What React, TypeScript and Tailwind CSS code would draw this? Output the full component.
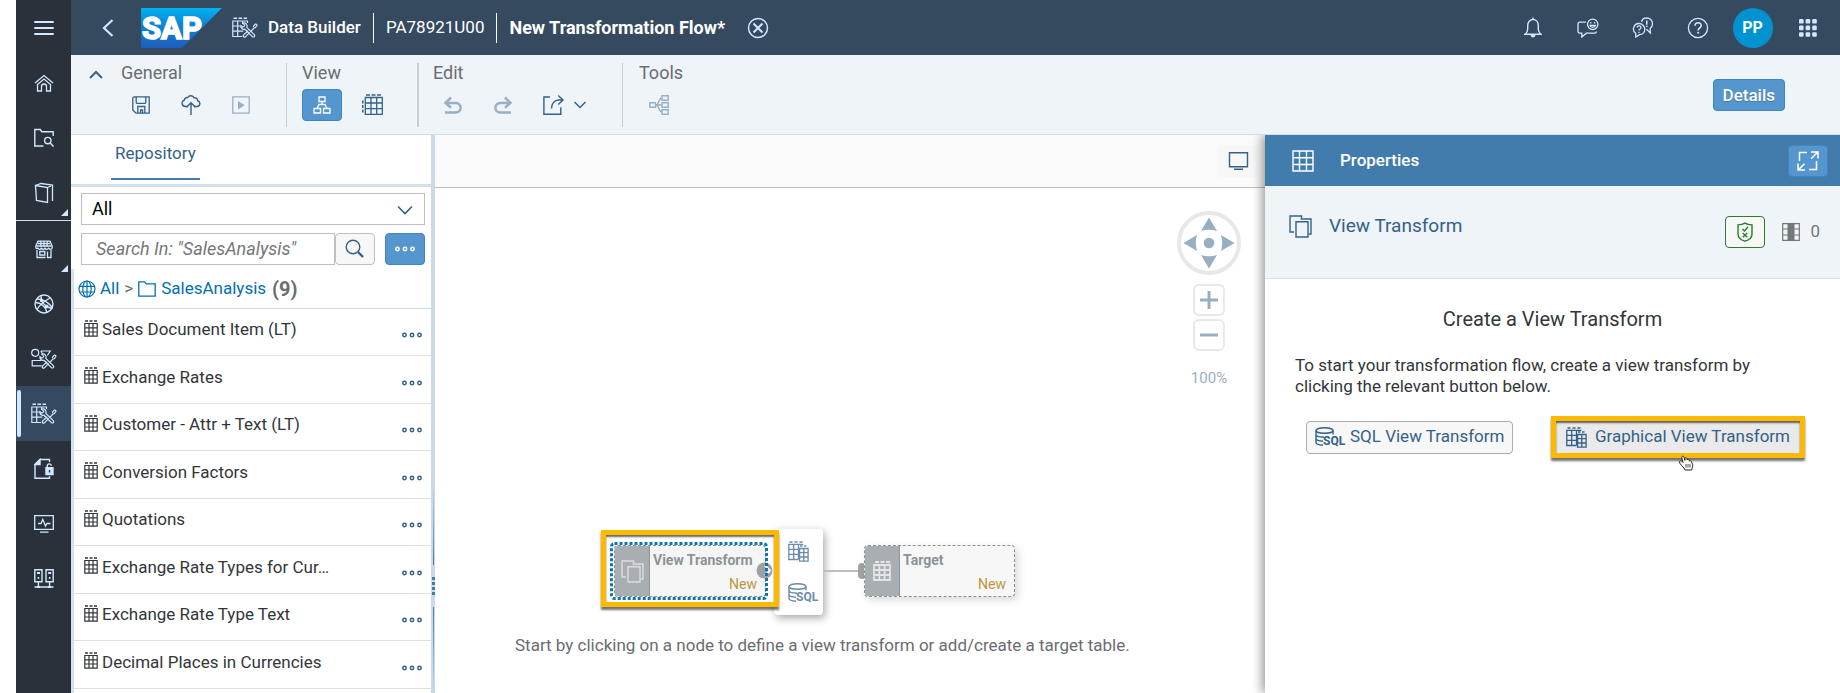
import type { ReactNode } from "react";

type IconProps = { className?: string };

function Svg({ w, h, className = "", sw = 1.3, children }: { w: number; h: number; className?: string; sw?: number; children: ReactNode }) {
  return (
    <svg
      width={w}
      height={h}
      viewBox={`0 0 ${w} ${h}`}
      fill="none"
      stroke="currentColor"
      strokeWidth={sw}
      className={`shrink-0 ${className}`}
      aria-hidden="true"
    >
      {children}
    </svg>
  );
}

const ChevronDown = ({ className }: IconProps) => (
  <Svg w={16} h={10} className={className} sw={1.6}>
    <path d="M1 1.5 8 8.5 15 1.5" />
  </Svg>
);

const SmallChevron = () => (
  <Svg w={12} h={8} sw={1.4}>
    <path d="M.5 1 6 6.500 11.500 1" />
  </Svg>
);

const MenuIcon = () => (
  <Svg w={20} h={16} sw={2}>
    <path d="M1 2h18M1 8h18M1 14h18" strokeLinecap="round" />
  </Svg>
);

const HomeIcon = () => (
  <Svg w={20} h={20}>
    <path d="M1 10 10 2.500 19 10" />
    <path d="M3.500 11.500 10 6l6.500 5.500V18H12.500v-4.500a2.500 2.500 0 0 0-5 0V18h-4z" />
  </Svg>
);

const FolderSearchIcon = () => (
  <Svg w={20} h={20} sw={1.4}>
    <path d="M9.500 18H.8V1.500h5.500l1.500 2.200h11.400V8" />
    <circle cx="13.800" cy="12.600" r="3.200" />
    <path d="m16.200 15 3.300 3.600" />
  </Svg>
);

const BoxIcon = () => (
  <Svg w={20} h={22} sw={1.3}>
    <path d="M1.500 3.500 13.500 5.500V20.500L2.500 18.500z" />
    <path d="M1.500 3.500 7 1.500 18.500 3V19M13.500 5.500 17 4" />
  </Svg>
);

const ShopIcon = () => (
  <Svg w={18} h={20} sw={1.3}>
    <path d="M3 2.200h12l2.200 5v1.300a1.800 1.800 0 0 1-3.600 0 1.800 1.800 0 0 1-3.600 0 1.800 1.800 0 0 1-3.600 0 1.800 1.800 0 0 1-3.600 0 1 1 0 0 1-2 0V7.200z" />
    <path d="M3 4.500h12M1.500 7h15M5.800 2v6M9 2v6M12.200 2v6" />
    <path d="M2 11v7.500h8.500M16 11v7.500h-3.500v-6M4.800 12.500h5v3.500h-5z" />
  </Svg>
);

const NetworkIcon = () => (
  <Svg w={20} h={20} sw={1.4}>
    <circle cx="10" cy="10" r="9" />
    <path d="M7 2c0 6 4 11 11.500 12.500M3 5c6 0 11 3 15.500 8.500M1.500 8.500C7 8.500 12 13 13 18.500M16 4C11.500 6.500 5.500 11 3 15.500" />
    <circle cx="7.500" cy="6.500" r="1" fill="currentColor" />
    <circle cx="12.500" cy="12.500" r="1.300" fill="currentColor" />
  </Svg>
);

const toolsPath = (
  <>
    <path d="m10.800 6.200 1.900 1.900-.7 1.500-1.600.4-1.500-1.400a3.100 3.100 0 0 0 4 3.600l7.500 7.400a1.200 1.200 0 0 0 1.900-1.900l-7.500-7.300a3.100 3.100 0 0 0-4-4.200z" />
    <path d="m23.800 6.800 1.200 1.200-1.500 2.500-1.300.3-3.800 4M16.200 13.700l-4.600 4.200a1.300 1.300 0 0 0 1.800 1.900l4.300-4.500M21.400 10l.3-1.300 2.100-1.900" />
  </>
);

const DataBuilderIcon = () => (
  <Svg w={26} h={22} sw={1.2}>
    <path d="M1.500 1.200h3.500M6.500 1.200h3.500M11.500 1.200H15" strokeWidth="1.600" />
    <path d="M10 19.500H.8V4h14.700v2M5.700 4v15.500M10.600 4v3M.8 9h8M.8 14.200h10.500" />
    {toolsPath}
  </Svg>
);

const BusinessBuilderIcon = () => (
  <Svg w={26} h={22} sw={1.2}>
    <circle cx="4.200" cy="4.800" r="3.500" />
    <path d="M9.800 3h9.500l-3 4.500M9.800 3l1.700 3M10.500 12.500H1.200v5.300h9.500" />
    {toolsPath}
  </Svg>
);

const LockedDocIcon = () => (
  <Svg w={20} h={22} sw={1.4}>
    <path d="M15.500 4V1.500H6L1 6.500v13.800h14.500v-2" />
    <path d="M6 1.500v5H1z" fill="currentColor" />
    <path d="M12 9.800h7v6.800h-7z" fill="currentColor" />
    <path d="M13.300 9.500V8a2 2 0 0 1 4-.2" />
    <path d="M15.500 12v2.500" stroke="#2a313a" />
  </Svg>
);

const MonitorPulseIcon = () => (
  <Svg w={20} h={20} sw={1.3}>
    <path d="M.7 1.700h18.600v13.600H.7zM6 18.200h8.500" />
    <path d="M4 9.500h3l1.800-4 2.700 6.500 1.500-2.500h3.500" />
  </Svg>
);

const ServersIcon = () => (
  <Svg w={20} h={20} sw={1.4}>
    <path d="M.8.800h7.200v12H.8zM12 .8h7.200v12H12zM4.400 13v6M15.600 13v6M.5 18h19" />
    <path d="M3 4h3M14.200 4h3M3.700 9h1.500M14.900 9h1.500" strokeWidth="1.800" />
    <path d="M3 17h3v2H3zM14 17h3v2h-3z" fill="currentColor" stroke="none" />
  </Svg>
);

const BellIcon = () => (
  <Svg w={18} h={21} sw={1.4}>
    <path d="M1 17.200c2-1.500 2.700-2.700 2.700-5V8.500C3.700 5 6 2.500 9 2.500s5.300 2.500 5.300 6v3.700c0 2.300.7 3.500 2.700 5z" />
    <path d="M9 .5v2" />
    <path d="M6.500 18h5a2.500 2.500 0 0 1-5 0z" fill="currentColor" stroke="none" />
  </Svg>
);

const FeedbackIcon = () => (
  <Svg w={22} h={20} sw={1.3}>
    <path d="M9 4.200H2.700a1.700 1.700 0 0 0-1.700 1.700v7.600a1.700 1.700 0 0 0 1.700 1.700h2.100V19l4.500-3.800h8.400a1.700 1.700 0 0 0 1.700-1.700" />
    <circle cx="15.700" cy="6.300" r="5.200" />
    <path d="M13 7.300c.5 2.400 4.900 2.400 5.400 0z" />
    <path d="M13.800 4v1.600M17.600 4v1.600" />
  </Svg>
);

const ChatHelpIcon = () => (
  <Svg w={22} h={21} sw={1.3}>
    <path d="M9.600 5C10 2.500 12 1 14.500 1A5.700 5.700 0 0 1 20.500 6.700c0 2.300-1 3.800-2.300 4.600l.2 4.700-4-3.800" />
    <path d="M7 6.500a5.800 5.800 0 0 1 5.800 5.700C12.800 15.300 10.500 17.500 7.500 17.700L3.800 20V16.500A5.500 5.500 0 0 1 7 6.500z" />
    <path d="M5 10.500c.2-2.200 4-2.200 4 0 0 1.500-2 1.500-2 3M7 14.700v1.300" />
    <path d="M14.800 3.500v4.300M14.800 8.800V10" strokeWidth="1.500" />
  </Svg>
);

const HelpIcon = () => (
  <Svg w={22} h={22} sw={1.3}>
    <circle cx="11" cy="11" r="9.600" />
    <path d="M8 8.800c0-4 6.200-4 6.200-.3 0 2.300-3 2.500-3 5" strokeWidth="1.600" />
    <path d="M11.200 14.800v1.800" strokeWidth="1.800" />
  </Svg>
);

const AppsIcon = () => (
  <Svg w={18} h={18}>
    {[0, 6.600, 13.200].map((y) =>
      [0, 6.600, 13.200].map((x) => (
        <rect key={`${x}-${y}`} x={x} y={y} width="4.600" height="4.600" rx="1.200" fill="currentColor" stroke="none" />
      )),
    )}
  </Svg>
);

const SaveIcon = () => (
  <Svg w={18} h={18} sw={1.3}>
    <path d="M2.300.8h14.900v16.400H4L.8 14V2.300A1.500 1.500 0 0 1 2.300.8z" />
    <path d="M4.200.8v5.400a1.200 1.200 0 0 0 1.200 1.200h7.200a1.200 1.200 0 0 0 1.200-1.200V.8M5.800 17v-6.500h7V17M8.500 17v-3h2v3" />
  </Svg>
);

const CloudUpIcon = () => (
  <Svg w={20} h={20} sw={1.4}>
    <path d="M7 11.500H4.200a3.300 3.300 0 0 1-.9-6.400A3 3 0 0 1 6.700 2.500C8 .2 12 .2 13 2.800a3 3 0 0 1 3.700 3 2.900 2.900 0 0 1-.6 5.700H13" />
    <path d="M10 20V8M5.500 12.300 10 7.800l4.500 4.500" />
  </Svg>
);

const PlayBoxIcon = () => (
  <Svg w={18} h={18} sw={1.3}>
    <path d="M.8.800h16.400v16.400H.8z" />
    <path d="M6 5v8.400l6.800-4.200z" fill="currentColor" stroke="none" />
  </Svg>
);

const DiagramIcon = () => (
  <Svg w={18} h={18} sw={1.3}>
    <path d="M6 1h6v4.500H6zM1 12.500h6.500V17H1zM10.500 12.500H17V17h-6.500zM9 5.500v3M4 12.500 6 8.500h6l2 4" />
  </Svg>
);

const DataTableIcon = () => (
  <Svg w={21} h={21} sw={1.3}>
    <path d="M4 .9h4M9.500 .9h4M15 .9h4M.8 6.500v3M.8 11v3M.8 15.500v3" strokeWidth="1.500" />
    <path d="M3.300 3.500h17v16.800h-17zM9 3.500v17M14.700 3.500v17M3.300 9h17M3.300 14.700h17" />
  </Svg>
);

const UndoIcon = () => (
  <Svg w={18} h={18} sw={2.500}>
    <path d="M1 16.500h10.800a4.800 4.800 0 0 0 0-9.600H1.800M7 1.500 1.500 6.900 7 11.800" />
  </Svg>
);

const RedoIcon = () => (
  <Svg w={18} h={18} sw={2.500}>
    <path d="M17 16.500H6.200a4.800 4.800 0 0 1 0-9.600h10M11 1.500 16.500 6.900 11 11.800" />
  </Svg>
);

const ExportIcon = () => (
  <Svg w={21} h={20} sw={1.400}>
    <path d="M7 2H.9v17.200h16.900v-7" />
    <path d="M8.500 13.500c0-5 3-8.500 7-8.500h4.300M15.300.6 20 5l-4.700 4.400" />
  </Svg>
);

const TreeIcon = () => (
  <Svg w={20} h={20} sw={1.400}>
    <path d="M.8 7.800h5.700v4.400H.8zM13 .8h6.200v4.400H13zM13 7.800h6.200v4.400H13zM13 14.800h6.200v4.400H13zM6.500 10H13M7 10c3 0 2.500-7 6-7M7 10c3 0 2.500 7 6 7" />
  </Svg>
);

const SearchIcon = () => (
  <Svg w={20} h={20} sw={1.400}>
    <circle cx="8" cy="8" r="6.800" />
    <path d="m13 13 5 5" strokeWidth="2.400" />
  </Svg>
);

const DotsIcon = () => (
  <Svg w={20} h={6} sw={1.500}>
    <circle cx="2.500" cy="3" r="1.700" />
    <circle cx="10" cy="3" r="1.700" />
    <circle cx="17.500" cy="3" r="1.700" />
  </Svg>
);

const GlobeIcon = () => (
  <Svg w={18} h={18} sw={1.200}>
    <circle cx="9" cy="9" r="8" />
    <ellipse cx="9" cy="9" rx="4.200" ry="8" />
    <path d="M1.500 6.300h15M1.500 12h15M9 1v16" />
  </Svg>
);

const FolderIcon = () => (
  <Svg w={18} h={16} sw={1.300}>
    <path d="M.8.900h5.700l1.700 2h9v12.200H.8z" />
  </Svg>
);

const TableIcon = ({ className }: IconProps) => (
  <Svg w={14} h={17} sw={1.200} className={className}>
    <path d="M1 1h3M5.500 1h3M10 1h3" strokeWidth="1.400" />
    <path d="M.8 3.500h12.400v12.700H.8zM5 3.500v12.700M9 3.500v12.700M.8 7.800h12.400M.8 12h12.400" />
  </Svg>
);

const MonitorIcon = () => (
  <Svg w={21} h={18} sw={1.400}>
    <path d="M1.500.8h18v14h-18zM6 17.200h9" />
  </Svg>
);

const GridIcon = () => (
  <Svg w={22} h={22} sw={1.400}>
    <path d="M1 1h20v20H1zM7.500 1v20M14.500 1v20M1 7.800h20M1 14.500h20" />
  </Svg>
);

const ExpandIcon = () => (
  <Svg w={22} h={20} sw={1.500}>
    <path d="M2.500 10V1.500h7.500M19.500 10v8.500H12" />
    <path d="M14 .9h7v6.500M21 .9l-7 6.800M1 12.500v6.600h7M1 19.100l6.500-6.400" />
  </Svg>
);

const CopyIcon = ({ className }: IconProps) => (
  <Svg w={23} h={23} sw={1.400} className={className}>
    <path d="M5 17H1V1h11.500v2" />
    <path d="M11.500 4H22v15h-2.500" />
    <path d="M7 6.700h12V22H7z" />
  </Svg>
);

const ShieldIcon = () => (
  <Svg w={16} h={20} sw={1.400}>
    <path d="M8 1.200c2 1.300 4.300 1.700 7 1.700v9c0 3.500-3 6-7 7.300-4-1.300-7-3.800-7-7.300v-9c2.700 0 5-.4 7-1.700z" />
    <path d="m5.500 7 2 2 3.500-4.200M5.700 11l4.600 4.200M10.300 11l-4.600 4.200" />
  </Svg>
);

const ColumnIcon = () => (
  <Svg w={18} h={18} sw={1.200}>
    <path d="M.7.700h16.600v16.600H.7zM.7 6h16.600M.7 12h16.600" />
    <path d="M5.500 0h7v18h-7z" fill="currentColor" stroke="none" />
  </Svg>
);

const GraphicalViewIcon = () => (
  <Svg w={21} h={21} sw={1.300}>
    <path d="M1.500 1h3M6.500 1h3M11.500 1h3M12 5h2.500M16 5h2.500" strokeWidth="1.500" />
    <path d="M10.500 18.500H.8V3.300h14.500M5.700 3.300v15.200M10.500 3.300v15.200M.8 8.300h10M.8 13.400h10" />
    <path d="M11.600 7.500h8.500v12.700h-8.500zM15.800 7.500v12.700M11.600 11.700h8.500M11.600 16h8.500" />
  </Svg>
);

const SqlIcon = () => (
  <svg width="31" height="20" viewBox="0 0 31 20" fill="none" stroke="currentColor" strokeWidth="1.400" className="shrink-0" aria-hidden="true">
    <ellipse cx="9.500" cy="3.500" rx="8.500" ry="2.800" />
    <path d="M1 3.500v12c0 1.400 3 2.500 7 2.700M18 3.500v4M1 7.500c0 1.500 3.500 2.600 8 2.700M1 11.500c0 1.500 3.200 2.500 7 2.700" />
    <text x="8" y="18" fill="currentColor" stroke="none" fontFamily="Roboto, sans-serif" fontWeight="700" fontSize="12">
      SQL
    </text>
  </svg>
);

const SapLogo = () => (
  <svg width="81" height="40" viewBox="0 0 81 40" className="shrink-0" role="img" aria-label="SAP">
    <defs>
      <linearGradient id="sap" x1="0" y1="0" x2="0" y2="1">
        <stop offset="0" stopColor="#00b4f1" />
        <stop offset="0.400" stopColor="#0d86d6" />
        <stop offset="1" stopColor="#1e5dbb" />
      </linearGradient>
    </defs>
    <path d="M0 0h81L41 40H0z" fill="url(#sap)" />
    <text x="1" y="31" fill="#fff" stroke="#fff" strokeWidth="1.600" fontFamily="Roboto, 'Liberation Sans', sans-serif" fontWeight="700" fontSize="31">
      SAP
    </text>
  </svg>
);

type NavItem = { label: string; icon: ReactNode; active?: boolean; sub?: boolean; ruled?: boolean };

const navItems: NavItem[] = [
  { label: "Home", icon: <HomeIcon /> },
  { label: "Repository Explorer", icon: <FolderSearchIcon /> },
  { label: "Catalog", icon: <BoxIcon />, sub: true, ruled: true },
  { label: "Data Marketplace", icon: <ShopIcon />, sub: true },
  { label: "Semantic Onboarding", icon: <NetworkIcon /> },
  { label: "Business Builder", icon: <BusinessBuilderIcon /> },
  { label: "Data Builder", icon: <DataBuilderIcon />, active: true },
  { label: "Data Access Controls", icon: <LockedDocIcon /> },
  { label: "Data Integration Monitor", icon: <MonitorPulseIcon /> },
  { label: "Connections", icon: <ServersIcon /> },
];

function SideNav() {
  return (
    <nav className="flex w-[55px] shrink-0 flex-col bg-[#2a313a] text-[#d1e8ff]">
      <button aria-label="Menu" className="flex h-[55px] items-center justify-center">
        <MenuIcon />
      </button>
      {navItems.map((n) => (
        <a
          key={n.label}
          href="#"
          aria-label={n.label}
          className={`relative flex items-center justify-center ${n.active ? "bg-[#354a5f]" : ""} ${n.ruled ? "h-14 border-b border-[#d5dade]" : "h-[55px]"}`}
        >
          {n.icon}
          {n.active && <span className="absolute inset-y-1 left-[1px] w-1 rounded-full bg-[#d1e8ff]" />}
          {n.sub && (
            <svg width="7" height="7" viewBox="0 0 7 7" className="absolute right-[3px] bottom-1" aria-hidden="true">
              <path d="M7 0v7H0z" fill="#d1e8ff" />
            </svg>
          )}
        </a>
      ))}
    </nav>
  );
}

const shellButton = "flex h-[55px] w-[55px] items-center justify-center";

function ShellBar() {
  return (
    <header className="flex h-[55px] shrink-0 items-center bg-[#354a5f] pr-[5px] text-lg text-white">
      <button aria-label="Back" className="flex h-10 w-[70px] items-center justify-center pl-1 text-[#d1e8ff]">
        <Svg w={12} h={18} sw={2.200}>
          <path d="M10.500 1 2 9l8.500 8" />
        </Svg>
      </button>
      <SapLogo />
      <span className="ml-[10px] text-[#d1e8ff]">
        <DataBuilderIcon />
      </span>
      <a href="#" className="ml-[10px] text-[17px] font-medium">Data Builder</a>
      <span className="mx-3 h-[30px] w-px bg-white" />
      <a href="#" className="text-[17px]">PA78921U00</a>
      <span className="mx-3 h-[30px] w-px bg-white" />
      <h1 className="font-bold">New Transformation Flow*</h1>
      <button aria-label="Close" className="ml-[22px] text-[#d1e8ff]">
        <Svg w={22} h={22} sw={1.500}>
          <circle cx="11" cy="11" r="9.500" />
          <path d="m6.500 6.500 9 9M15.500 6.500l-9 9" strokeWidth="2" />
        </Svg>
      </button>
      <div className="ml-auto flex items-center text-[#d1e8ff]">
        <button aria-label="Notifications" className={shellButton}><BellIcon /></button>
        <button aria-label="Feedback" className={shellButton}><FeedbackIcon /></button>
        <button aria-label="Support" className={shellButton}><ChatHelpIcon /></button>
        <button aria-label="Help" className={shellButton}><HelpIcon /></button>
        <button className={shellButton}>
          <span className="flex size-10 items-center justify-center rounded-full bg-[#0092d1] text-base font-bold text-white">PP</span>
        </button>
        <button aria-label="Products" className={shellButton}><AppsIcon /></button>
      </div>
    </header>
  );
}

function ToolButton({ label, active, disabled, children }: { label: string; active?: boolean; disabled?: boolean; children: ReactNode }) {
  return (
    <button
      aria-label={label}
      disabled={disabled}
      className={`flex h-8 w-10 items-center justify-center rounded ${
        active ? "border border-[#3f86c1] bg-[#5496cd] text-white" : disabled ? "text-[#98afc5]" : "text-[#346187]"
      }`}
    >
      {children}
    </button>
  );
}

function ToolGroup({ title, className = "", children }: { title: string; className?: string; children: ReactNode }) {
  return (
    <section className={`h-full ${className}`}>
      <h2 className="text-lg leading-[20px] text-[#6a6d70]">{title}</h2>
      <div className="mt-[6px] flex gap-[10px]">{children}</div>
    </section>
  );
}

function Toolbar() {
  return (
    <div className="flex h-20 shrink-0 items-center border-b border-[#c9dded] bg-[#eff4f8] pr-[55px]">
      <div className="flex h-16 items-start">
        <button aria-label="Collapse toolbar" className="mr-[18px] ml-[18px] flex h-6 items-center text-[#346187]">
          <Svg w={14} h={9} sw={2}>
            <path d="M1 8 7 2l6 6" />
          </Svg>
        </button>
        <ToolGroup title="General" className="border-r border-[#c9ced3] pr-[25px]">
          <ToolButton label="Save"><SaveIcon /></ToolButton>
          <ToolButton label="Deploy"><CloudUpIcon /></ToolButton>
          <ToolButton label="Run" disabled><PlayBoxIcon /></ToolButton>
        </ToolGroup>
        <ToolGroup title="View" className="border-r-2 border-[#c9ced3] pr-[25px] pl-[15px]">
          <ToolButton label="Diagram" active><DiagramIcon /></ToolButton>
          <ToolButton label="Data preview"><DataTableIcon /></ToolButton>
        </ToolGroup>
        <ToolGroup title="Edit" className="border-r border-[#c9ced3] pr-[26px] pl-[14px]">
          <ToolButton label="Undo" disabled><UndoIcon /></ToolButton>
          <ToolButton label="Redo" disabled><RedoIcon /></ToolButton>
          <button aria-label="Export" className="flex h-8 items-center gap-[10px] px-[10px] text-[#346187]">
            <ExportIcon />
            <SmallChevron />
          </button>
        </ToolGroup>
        <ToolGroup title="Tools" className="pl-4">
          <ToolButton label="Impact analysis" disabled><TreeIcon /></ToolButton>
        </ToolGroup>
      </div>
      <button className="ml-auto h-8 rounded border border-[#3f86c1] bg-[#5496cd] px-[9px] text-[17px] leading-[20px] font-medium text-white text-shadow-xs">Details</button>
    </div>
  );
}

const objects = [
  "Sales Document Item (LT)",
  "Exchange Rates",
  "Customer - Attr + Text (LT)",
  "Conversion Factors",
  "Quotations",
  "Exchange Rate Types for Cur…",
  "Exchange Rate Type Text",
  "Decimal Places in Currencies",
];

function RepositoryPanel() {
  return (
    <aside className="flex w-[360px] shrink-0 flex-col overflow-hidden bg-white text-[17px]">
      <div className="h-[52px] shrink-0 border-b-[3px] border-[#d3e2ef] pl-10">
        <button className="h-[45px] border-b-2 border-[#427cac] px-1 pb-[6px] text-[#346187]">Repository</button>
      </div>
      <div className="flex flex-col gap-2 px-[6px] pt-[6px] pb-1 pl-[10px]">
        <div className="relative">
          <select aria-label="Object type" className="h-8 w-full appearance-none border border-[#bfbfbf] bg-white pl-[10px] text-lg text-black">
            <option>All</option>
          </select>
          <ChevronDown className="pointer-events-none absolute top-3 right-3 text-[#346187]" />
        </div>
        <div className="flex h-8">
          <input
            type="search"
            aria-label="Search"
            placeholder={'Search In: "SalesAnalysis"'}
            className="min-w-0 flex-1 border border-[#bfbfbf] px-[14px] text-lg italic placeholder:text-[#74777a]"
          />
          <button aria-label="Search" className="flex w-10 items-center justify-center rounded border border-[#bfbfbf] bg-[#f7f7f7] text-[#346187]">
            <SearchIcon />
          </button>
          <button aria-label="More" className="ml-[10px] flex w-10 items-center justify-center rounded border border-[#3f86c1] bg-[#5496cd] text-white">
            <DotsIcon />
          </button>
        </div>
      </div>
      <div className="flex-1 border-l-[3px] border-[#d3e2ef]">
        <div className="flex h-10 items-center border-b border-[#c9dded] pl-1 text-[#0070b1]">
          <GlobeIcon />
          <a href="#" className="ml-1">All</a>
          <span className="mx-[5px] text-[#6a6d70]">&gt;</span>
          <FolderIcon />
          <a href="#" className="ml-[5px]">SalesAnalysis</a>
          <span className="ml-[6px] text-xl leading-[20px] font-bold text-[#6a6d70]">(9)</span>
        </div>
        <ul>
          {objects.map((name) => (
            <li key={name} className="flex h-[47px] items-center border-b border-[#e0e0e0] pr-[9px] pl-[10px] text-[#32363a] even:h-12">
              <TableIcon className="mb-2" />
              <span className="ml-1 flex-1 truncate pb-1">{name}</span>
              <button aria-label={`Actions for ${name}`} className="pt-[6px] text-[#346187]">
                <DotsIcon />
              </button>
            </li>
          ))}
        </ul>
      </div>
    </aside>
  );
}

function Splitter() {
  return (
    <div className="flex w-1 shrink-0 flex-col items-center gap-3 bg-[#c9d9e8] pt-[350px]">
      <span className="h-20 w-px bg-linear-to-b from-[#c9d9e8] to-[#427cac]" />
      <span className="flex flex-col gap-[2px]">
        {[0, 1, 2, 3].map((i) => (
          <span key={i} className="size-[3px] bg-[#427cac]" />
        ))}
      </span>
      <span className="w-px flex-1 bg-linear-to-b from-[#427cac] to-[#c9d9e8]" />
    </div>
  );
}

const zoomButton = "flex size-8 items-center justify-center rounded-md border-2 border-[#e8e8e8] bg-white";

function Canvas() {
  return (
    <main className="flex min-w-0 flex-1 flex-col bg-white">
      <div className="flex h-[53px] shrink-0 items-center justify-end border-b border-[#bfbfbf] bg-[#fafafa] pr-[7px]">
        <button aria-label="Full screen" className="flex h-8 w-10 items-center justify-center bg-[#f7f7f7] text-[#346187]">
          <MonitorIcon />
        </button>
      </div>
      <div className="relative flex-1 overflow-hidden">
        <div className="absolute top-[23px] right-6 flex flex-col items-center text-[#98afc2]">
          <svg width="64" height="64" viewBox="0 0 64 64" fill="currentColor" role="img" aria-label="Pan">
            <circle cx="32" cy="32" r="30" fill="#fff" stroke="#e8e8e8" strokeWidth="4" />
            <circle cx="32" cy="32" r="5.300" />
            <path d="m32 6.500 8 13.500c-5-1.600-11-1.600-16 0zM32 57.500l8-13.500c-5 1.600-11 1.600-16 0zM6.500 32 20 24c-1.600 5-1.600 11 0 16zM57.500 32 44 24c1.600 5 1.600 11 0 16z" />
          </svg>
          <button aria-label="Zoom in" className={`mt-[9px] ${zoomButton}`}>
            <Svg w={18} h={18} sw={3}><path d="M0 9h18M9 0v18" /></Svg>
          </button>
          <button aria-label="Zoom out" className={`mt-[3px] ${zoomButton}`}>
            <Svg w={18} h={18} sw={3}><path d="M0 9h18" /></Svg>
          </button>
          <span className="mt-[17px] text-[15px] leading-[20px]">100%</span>
        </div>

        <div className="absolute top-[341px] left-[339px] h-[86px] w-[49px] rounded bg-white shadow-[2px_3px_8px_rgba(0,0,0,0.35)]">
          <div className="flex h-full flex-col items-start justify-between py-3 pl-[14px] text-[#6b8cab]">
            <button aria-label="Graphical view"><GraphicalViewIcon /></button>
            <button aria-label="SQL view"><SqlIcon /></button>
          </div>
        </div>
        <span className="absolute top-[382px] left-[388px] h-[2px] w-[35px] bg-[#bdbdbd]" />
        <span className="absolute top-[375px] left-[423px] h-4 w-2 rounded-sm bg-[#a3a3a3]" />

        <div className="absolute top-[342px] left-[166px] h-[77px] w-[178px] border-[5px] border-[#fdb900] bg-white shadow-[0_3px_2px_rgba(0,0,0,0.55),inset_0_2px_2px_rgba(0,0,0,0.6)]" />
        <div className="absolute top-[357px] left-[179px] flex h-[52px] w-[152px] overflow-hidden rounded border border-dashed border-[#899296] bg-[#f5f5f5]">
          <span className="flex w-[35px] shrink-0 items-center justify-center border-r border-[#8c9599] bg-[#a8aeb1] text-[#dcdfe0]"><CopyIcon /></span>
          <span className="flex flex-1 flex-col justify-between pt-1 pb-[2px] pl-[3px]">
            <span className="text-sm leading-[20px] font-bold whitespace-nowrap text-[#8b9497]">View Transform</span>
            <span className="pr-2 text-right text-sm leading-[20px] text-[#bd963c]">New</span>
          </span>
        </div>
        <svg width="17" height="17" viewBox="0 0 17 17" className="absolute top-[374px] left-[321px]" aria-hidden="true">
          <circle cx="8.500" cy="8.500" r="8" fill="#a0a0a0" />
          <path d="m9 3.500 5 5-5 5" fill="none" stroke="#fff" strokeWidth="2" />
        </svg>
        <svg width="158" height="58" viewBox="0 0 158 58" className="absolute top-[354px] left-[175px]" aria-hidden="true">
          <rect x="1.500" y="1.500" width="155" height="55" rx="3" fill="none" stroke="#0a75b5" strokeWidth="3" strokeDasharray="3 2" />
        </svg>

        <div className="absolute top-[357px] left-[429px] flex h-[52px] w-[151px] overflow-hidden rounded border border-dashed border-[#899296] bg-[#f7f7f7] shadow-[3px_3px_8px_rgba(0,0,0,0.15)]">
          <span className="flex w-[35px] shrink-0 items-center justify-center border-r border-[#8c9599] bg-[#a8aeb1] text-[#e3e5e6]">
            <Svg w={18} h={20} sw={1.800}>
              <path d="M2 1h4M7.500 1h4M13 1h4" />
              <path d="M1 4h16v15H1zM6.300 4v15M11.600 4v15M1 9h16M1 14h16" />
            </Svg>
          </span>
          <span className="flex flex-1 flex-col justify-between pt-1 pb-[2px] pl-[3px]">
            <span className="text-sm leading-[20px] font-bold text-[#8b9497]">Target</span>
            <span className="pr-2 text-right text-sm leading-[20px] text-[#bd963c]">New</span>
          </span>
        </div>

        <p className="absolute top-[445px] left-20 text-[17px] leading-[24px] whitespace-nowrap text-[#6a6d70]">
          Start by clicking on a node to define a view transform or add/create a target table.
        </p>
      </div>
    </main>
  );
}

function Cursor() {
  return (
    <svg width="17" height="16" viewBox="0 0 17 16" className="absolute top-[34px] left-[122px]" aria-hidden="true">
      <path
        d="M1.500 6.500c.8-1 2-.8 2.800.2L5 7.500 3.800 2.500C3.600 1 5.500.8 6 2.200L7 5.500 6.800 3.500c.2-1 1.800-1 2 0l.4 1.500c.3-1 1.700-.9 1.900.1l.3 1c.5-.8 1.800-.5 2 .4.800 2.500 2.300 3.500.6 7l-.3 1.500H7l-1-2c-1.500-1.500-3-3-4.200-4.800z"
        fill="#fff"
        stroke="#222"
      />
      <path d="M8 9v3.500M10 9v3.500M12 9v3.500" stroke="#222" strokeWidth="0.800" />
    </svg>
  );
}

function PropertiesPanel() {
  return (
    <aside className="z-10 flex w-[575px] shrink-0 flex-col bg-white text-[17px] shadow-[-3px_0_10px_rgba(0,0,0,0.4)]">
      <div className="flex h-[51px] shrink-0 items-center bg-[#427cac] pr-3 pl-[27px] text-white">
        <GridIcon />
        <h2 className="ml-[26px] font-medium">Properties</h2>
        <button aria-label="Expand" className="ml-auto flex h-8 w-10 items-center justify-center rounded border border-[#3f86c1] bg-[#5496cd]">
          <ExpandIcon />
        </button>
      </div>
      <div className="flex h-[93px] shrink-0 items-center border-b border-[#d1e0ee] bg-[#eff4f8] pr-5 pl-6 text-[#346187]">
        <CopyIcon className="mb-3" />
        <h3 className="ml-[17px] pb-3 text-[19px]">View Transform</h3>
        <button aria-label="Validation" className="ml-auto flex h-8 w-10 items-center justify-center rounded border border-[#2b7c2b] bg-[#f7f7f7] text-[#2b7c2b]">
          <ShieldIcon />
        </button>
        <span className="ml-[17px] flex items-center gap-[10px] text-[#74777a]">
          <ColumnIcon />0
        </span>
      </div>
      <div className="px-[30px] pt-[27px] text-[#32363a]">
        <h4 className="text-center text-xl leading-[26px]">Create a View Transform</h4>
        <p className="mt-[23px] w-[480px] leading-[21px]">
          To start your transformation flow, create a view transform by clicking the relevant button below.
        </p>
        <div className="mt-[19px] flex items-center justify-between pr-[5px] pl-[11px] text-[#346187]">
          <button className="flex h-[33px] items-center gap-1 rounded border border-[#adadad] bg-[#f7f7f7] px-2">
            <SqlIcon />
            SQL View Transform
          </button>
          <div className="relative border-[5px] border-[#fdb900] shadow-[0_3px_2px_rgba(0,0,0,0.55)]">
            <button className="flex h-8 items-center gap-2 bg-[#eaeaea] px-[10px] shadow-[inset_0_2px_2px_rgba(0,0,0,0.6)]">
              <GraphicalViewIcon />
              Graphical View Transform
            </button>
            <Cursor />
          </div>
        </div>
      </div>
    </aside>
  );
}

export default function App() {
  return (
    <div className="flex h-screen overflow-hidden bg-white pl-4 font-[Roboto,'Liberation_Sans',sans-serif]">
      <SideNav />
      <div className="flex min-w-0 flex-1 flex-col">
        <ShellBar />
        <Toolbar />
        <div className="flex min-h-0 flex-1 overflow-hidden">
          <RepositoryPanel />
          <Splitter />
          <Canvas />
          <PropertiesPanel />
        </div>
      </div>
    </div>
  );
}
